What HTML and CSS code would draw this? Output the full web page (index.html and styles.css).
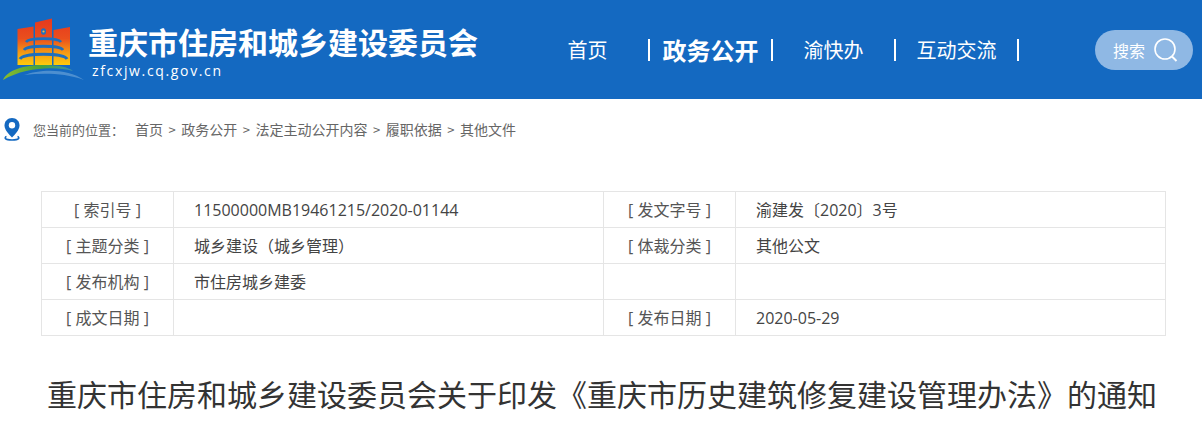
FILE: index.html
```html
<!DOCTYPE html>
<html lang="zh-CN">
<head>
<meta charset="utf-8">
<title>重庆市住房和城乡建设委员会</title>
<link rel="stylesheet" href="styles.css">
</head>
<body>
<header class="header">
  <svg class="logo" viewBox="0 0 84 72" width="84" height="72" aria-hidden="true">
    <defs>
      <linearGradient id="fill" gradientUnits="userSpaceOnUse" x1="0" y1="6" x2="0" y2="50">
        <stop offset="0" stop-color="#e63b1e"/>
        <stop offset="0.4" stop-color="#ea4f1d"/>
        <stop offset="0.72" stop-color="#f59a14"/>
        <stop offset="1" stop-color="#fdcb0c"/>
      </linearGradient>
      <linearGradient id="swoosh" x1="0" y1="0" x2="1" y2="0">
        <stop offset="0" stop-color="#8cbc2c"/>
        <stop offset="0.55" stop-color="#45a33c"/>
        <stop offset="1" stop-color="#3a8fb0"/>
      </linearGradient>
    </defs>
    <path d="M17.500 14 33.500 11.500V50H17.500Z" fill="url(#fill)"/>
    <path d="M35 7.500 52 3.500V50H35Z" fill="url(#fill)"/>
    <path d="M53.500 15 70 12V50H53.500Z" fill="url(#fill)"/>
    <ellipse cx="43.500" cy="16.500" rx="2.500" ry="3.200" fill="#1f6fc0"/>
    <circle cx="43.500" cy="16.500" r="1.100" fill="#f5b83a"/>
    <path d="M26 27C29 22.500 58 22.500 61 27" fill="none" stroke="#1f6fbd" stroke-width="2.600"/>
    <path d="M24 35C27 30 60 30 63 35" fill="none" stroke="#1f6fbd" stroke-width="2.800"/>
    <path d="M20 44C23 37.500 64 37.500 67 44" fill="none" stroke="#1f6fbd" stroke-width="3"/>
    <path d="M3 65C7 55 25 50 43 50 58 50 68 52 73 56 55 51 25 52 3 65Z" fill="url(#swoosh)"/>
    <path d="M24 60C40 54 68 53 84 65 64 58 44 58 24 60Z" fill="#4d8fd0"/>
  </svg>
  <div class="brand">
    <div class="brand-name">重庆市住房和城乡建设委员会</div>
    <div class="brand-url">zfcxjw.cq.gov.cn</div>
  </div>
  <nav class="nav">
    <a class="nav-item">首页</a><span class="nav-sep"></span>
    <a class="nav-item nav-current">政务公开</a><span class="nav-sep"></span>
    <a class="nav-item">渝快办</a><span class="nav-sep"></span>
    <a class="nav-item">互动交流</a><span class="nav-sep"></span>
  </nav>
  <div class="search">
    <span class="search-label">搜索</span>
    <svg class="search-icon" viewBox="0 0 26 26" width="26" height="26" aria-hidden="true">
      <circle cx="12" cy="12" r="10" fill="none" stroke="#fff" stroke-width="1.600"/>
      <path d="M19 19.500 23.500 24" fill="none" stroke="#fff" stroke-width="2"/>
    </svg>
  </div>
</header>

<div class="crumbs">
  <svg class="pin" viewBox="0 0 18 24" width="18" height="24" aria-hidden="true">
    <path d="M9 1C4.600 1 1.500 4.300 1.500 8.500 1.500 13 6 17.500 9 20.500 12 17.500 16.500 13 16.500 8.500 16.500 4.300 13.400 1 9 1Z" fill="#1469c1"/>
    <circle cx="9" cy="8.300" r="3.200" fill="#fff"/>
    <path d="M3.500 19.500C1 20.500 1.500 23 9 23S17 20.500 14.500 19.500" fill="none" stroke="#1469c1" stroke-width="1.500"/>
  </svg>
  <span class="crumb-lead">您当前的位置：</span>
  <span>首页</span><span class="crumb-arrow">&gt;</span><span>政务公开</span><span class="crumb-arrow">&gt;</span><span>法定主动公开内容</span><span class="crumb-arrow">&gt;</span><span>履职依据</span><span class="crumb-arrow">&gt;</span><span>其他文件</span>
</div>

<table class="meta">
  <colgroup>
    <col class="col-label"><col class="col-value"><col class="col-label"><col class="col-value-b">
  </colgroup>
  <tr>
    <th>[ 索引号 ]</th><td>11500000MB19461215/2020-01144</td>
    <th>[ 发文字号 ]</th><td>渝建发〔2020〕3号</td>
  </tr>
  <tr>
    <th>[ 主题分类 ]</th><td>城乡建设（城乡管理）</td>
    <th>[ 体裁分类 ]</th><td>其他公文</td>
  </tr>
  <tr>
    <th>[ 发布机构 ]</th><td>市住房城乡建委</td>
    <th></th><td></td>
  </tr>
  <tr>
    <th>[ 成文日期 ]</th><td></td>
    <th>[ 发布日期 ]</th><td>2020-05-29</td>
  </tr>
</table>

<h1 class="title">重庆市住房和城乡建设委员会关于印发《重庆市历史建筑修复建设管理办法》的通知</h1>
</body>
</html>
```

FILE: styles.css
```css
* { box-sizing: border-box; }

html, body {
  margin: 0;
  padding: 0;
  height: 429px;
  overflow: hidden;
  background: #fff;
  font-family: "Noto Sans CJK SC", "Noto Sans", sans-serif;
  color: #333;
}

.header {
  height: 99px;
  background: #1469c1;
  display: flex;
  align-items: center;
  color: #fff;
}

.logo { flex: none; margin-top: 3px; }

.brand {
  width: 443px;
  padding-left: 4px;
  margin-top: 5px;
  flex: none;
}

.brand-name {
  padding-top: 2px;
  font-family: "Liberation Sans", "Noto Sans CJK SC", sans-serif;
  font-size: 30px;
  font-weight: 700;
  line-height: 34px;
  white-space: nowrap;
}

.brand-url {
  margin-top: 1px;
  font-size: 14px;
  line-height: 18px;
  letter-spacing: 1.65px;
  padding-left: 4px;
  font-family: "Open Sans", "Noto Sans", sans-serif;
}

.nav {
  display: flex;
  align-items: center;
  flex: none;
  width: 568px;
}

.nav-item {
  width: 121px;
  text-align: center;
  font-size: 20px;
  line-height: 30px;
  white-space: nowrap;
}

.nav-current {
  font-size: 24px;
  font-weight: 700;
}

.nav-sep {
  width: 2px;
  height: 22px;
  background: #fff;
  flex: none;
}

.search {
  flex: none;
  width: 98px;
  height: 40px;
  border-radius: 20px;
  background: #8fb8e4;
  display: flex;
  align-items: center;
  padding-left: 18px;
  gap: 8px;
}

.search-label { font-size: 16px; line-height: 22px; }

.crumbs {
  height: 60px;
  padding: 0 0 0 3px;
  display: flex;
  align-items: center;
  font-size: 14px;
  color: #666;
  white-space: nowrap;
}

.pin { flex: none; margin-right: 12px; }

.crumb-lead { font-size: 13px; margin-right: 11px; }

.crumb-arrow { margin: 0 5.5px; font-size: 13px; }

.meta {
  margin: 32px 0 0 41px;
  width: 1124px;
  table-layout: fixed;
  border-collapse: collapse;
  font-family: "Open Sans", "Noto Sans CJK SC", sans-serif;
  font-size: 16px;
}

.col-label { width: 132px; }
.col-value { width: 430px; }
.col-value-b { width: 430px; }

.meta tr { height: 36px; }

.meta th,
.meta td {
  border: 1px solid #e5e5e5;
  padding: 0;
  line-height: 22px;
  white-space: nowrap;
}

.meta th {
  font-weight: 400;
  text-align: center;
  color: #555;
}

.meta td {
  padding-left: 20px;
  color: #444;
}

.title {
  margin: 22px 0 0;
  padding-left: 2px;
  text-align: center;
  font-size: 30px;
  font-weight: 400;
  line-height: 70px;
  color: #333;
  white-space: nowrap;
}
```
